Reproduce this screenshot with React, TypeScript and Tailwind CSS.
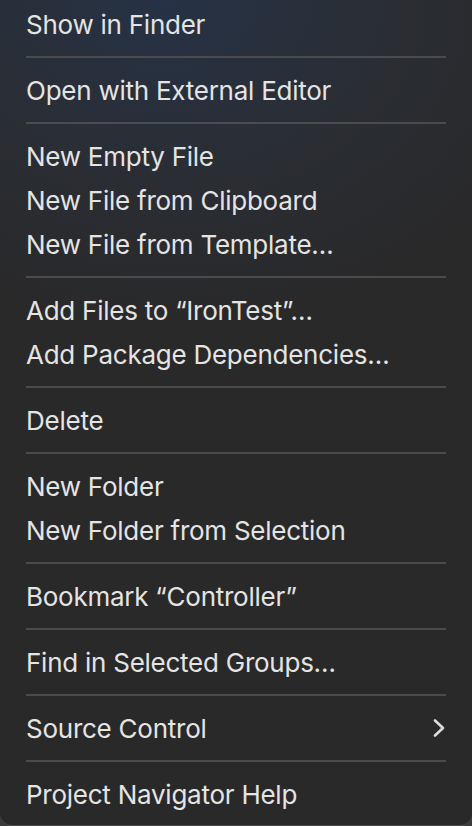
type Entry = { label: string; submenu?: boolean } | "sep";

const entries: Entry[] = [
  { label: "Show in Finder" },
  "sep",
  { label: "Open with External Editor" },
  "sep",
  { label: "New Empty File" },
  { label: "New File from Clipboard" },
  { label: "New File from Template…" },
  "sep",
  { label: "Add Files to “IronTest”…" },
  { label: "Add Package Dependencies…" },
  "sep",
  { label: "Delete" },
  "sep",
  { label: "New Folder" },
  { label: "New Folder from Selection" },
  "sep",
  { label: "Bookmark “Controller”" },
  "sep",
  { label: "Find in Selected Groups…" },
  "sep",
  { label: "Source Control", submenu: true },
  "sep",
  { label: "Project Navigator Help" },
];

export default function App() {
  return (
    <div className="h-[826px] w-[472px] overflow-hidden bg-[#3a3a3a]">
      <div className="flex h-[826px] w-[472px] flex-col rounded-b-[12px] border-b border-[#4a4a4c] bg-[radial-gradient(ellipse_90%_40%_at_35%_0%,#263246_0%,#2a2d33_55%,#29292a_100%)] pt-[2px] font-['Inter',sans-serif] text-[26px] text-[#e4e4e4]">
        {entries.map((e, i) =>
          e === "sep" ? (
            <div key={i} className="flex h-[22px] items-center px-[26px]">
              <div className="h-[2px] w-full bg-[#4b4b4d]" />
            </div>
          ) : (
            <div key={i} className="flex h-[44px] items-center justify-between pl-[26px] pr-[26px] pt-[2px] leading-none tracking-[-0.25px]">
              <span>{e.label}</span>
              {e.submenu && (
                <svg width="14" height="20" viewBox="0 0 14 20" className="-mt-[2px] text-[#dcdcdc]">
                  <polyline points="3,2.5 11,10 3,17.5" fill="none" stroke="currentColor" strokeWidth="2.6" strokeLinecap="round" strokeLinejoin="round" />
                </svg>
              )}
            </div>
          )
        )}
      </div>
    </div>
  );
}
